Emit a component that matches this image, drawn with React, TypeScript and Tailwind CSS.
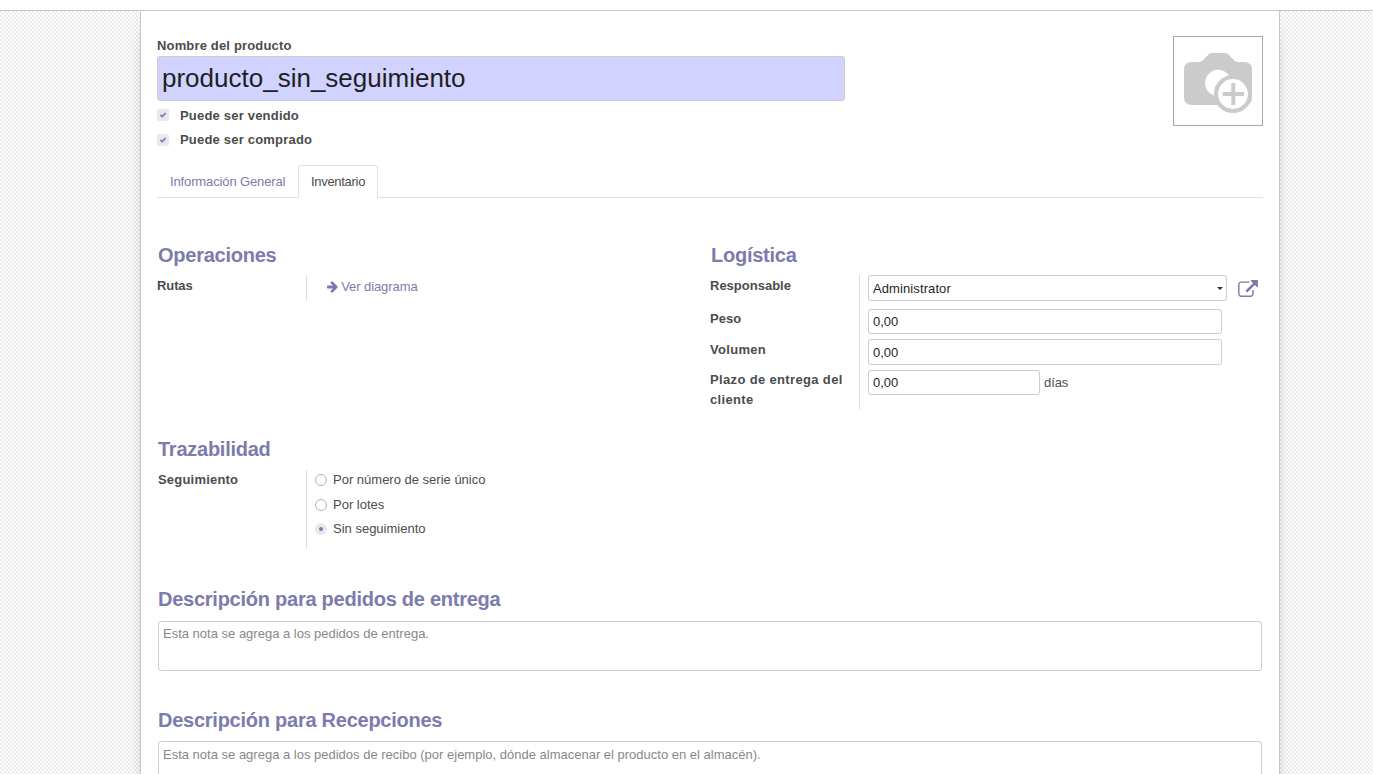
import type { ReactNode } from "react";

const label = "whitespace-nowrap text-[13px] leading-5 font-bold text-[#4c4c4c]";
const heading = "whitespace-nowrap text-[20px] leading-6 font-bold tracking-[-0.25px] text-[#7c7bad]";
const field = "rounded-[3px] border border-[#cccccc] bg-white px-1 text-[13px] text-[#1f1f1f]";

function Check({ children, boxClass }: { children: ReactNode; boxClass: string }) {
  return (
    <div className="flex h-5 items-start">
      <span className={`mr-[11px] size-3 rounded-[2px] bg-[#e6e9ed] ${boxClass}`}>
        <svg viewBox="0 0 12 12" className="size-3">
          <path d="M3.4 5.9 5.2 7.6 8.6 4.2" fill="none" stroke="#7c7bad" strokeWidth="1.7" />
        </svg>
      </span>
      <span className={`${label} pt-px tracking-[0.2px]`}>{children}</span>
    </div>
  );
}

function Radio({ children, checked }: { children: ReactNode; checked?: boolean }) {
  return (
    <div className="flex h-5 items-center">
      <span
        className={
          checked
            ? "mr-1.5 flex size-3 items-center justify-center rounded-full bg-[#e6e9ed]"
            : "mr-1.5 size-3 rounded-full border border-[#adb5bd] bg-white"
        }
      >
        {checked && <span className="size-1 rounded-full bg-[#7c7bad]" />}
      </span>
      <span className="text-[13px] leading-5 whitespace-nowrap text-[#4c4c4c]">{children}</span>
    </div>
  );
}

function Camera() {
  return (
    <svg viewBox="0 0 88 88" className="size-[90px] shrink-0 border border-[#a8a8a8] bg-white">
      <path
        d="M18 25h7q2.5 0 4-1.800L34.500 17.500Q35.500 16 37.500 16h14q2 0 3 1.500L60 23.200q1.500 1.800 4 1.800h6q8 0 8 8v27q0 8-8 8H18q-8 0-8-8V33q0-8 8-8Z"
        fill="#cbcbcb"
      />
      <circle cx="44.2" cy="46" r="13.2" fill="#fff" />
      <circle cx="59" cy="57" r="17" fill="#fff" stroke="#cbcbcb" strokeWidth="4.2" />
      <path d="M48.700 57H70M59.300 46v22" stroke="#cbcbcb" strokeWidth="4" />
    </svg>
  );
}

function ArrowRight() {
  return (
    <svg viewBox="0 0 1536 1920" className="h-[14px] w-[11.200px] shrink-0" fill="#7c7bad">
      <path d="M1472 960q0 54-37 91l-651 651q-39 37-91 37-51 0-90-37l-75-75q-38-38-38-91t38-91l293-293H117q-52 0-84.500-37.500T0 1024V896q0-53 32.500-90.500T117 768h704L528 474q-38-36-38-90t38-90l75-75q38-38 90-38 53 0 91 38l651 651q37 35 37 90z" />
    </svg>
  );
}

function ExternalLink() {
  return (
    <svg viewBox="0 0 1792 1536" className="ml-[11px] h-[17px] w-5 shrink-0" fill="#7c7bad">
      <path d="M1408 928v320q0 119-84.500 203.500T1120 1536H288q-119 0-203.500-84.500T0 1248V416q0-119 84.500-203.500T288 128h704q14 0 23 9t9 23v64q0 14-9 23t-23 9H288q-66 0-113 47t-47 113v832q0 66 47 113t113 47h832q66 0 113-47t47-113V928q0-14 9-23t23-9h64q14 0 23 9t9 23zm384-864v512q0 26-19 45t-45 19-45-19l-176-176-652 652q-10 10-23 10t-23-10L695 983q-10-10-10-23t10-23l652-652-176-176q-19-19-19-45t19-45 45-19h512q26 0 45 19t19 45z" />
    </svg>
  );
}

export default function App() {
  return (
    <div className="flex h-[774px] w-[1373px] flex-col overflow-hidden bg-white font-['Liberation_Sans',Arial,sans-serif]">
      <div className="h-[11px] shrink-0 border-b border-[#c8c8cb] bg-white" />
      <div className="flex min-h-0 flex-1 overflow-hidden bg-[conic-gradient(#ffffff_25%,#ebebeb_0_50%,#ffffff_0_75%,#ebebeb_0)] bg-size-[4px_4px] pl-[140px]">
        <main className="h-[900px] w-[1140px] shrink-0 border border-t-0 border-[#c8c8d3] bg-white pl-4 shadow-[0_5px_20px_-15px_#000]">
          <div className="flex h-[154px] w-[1106px] items-start justify-between pt-[25px]">
            <div className="w-[688px]">
              <div className={`${label} tracking-[0.16px]`}>Nombre del producto</div>
              <div className="flex h-[45px] items-center rounded-[3px] border border-[#cccccc] bg-[#d2d2ff] pl-1 text-[26px] text-[#1f1f1f]">
                <span className="whitespace-nowrap">producto_sin_seguimiento</span>
              </div>
              <div className="mt-1 flex flex-col gap-1">
                <Check boxClass="mt-1">Puede ser vendido</Check>
                <Check boxClass="mt-[5px]">Puede ser comprado</Check>
              </div>
            </div>
            <Camera />
          </div>

          <nav className="flex h-[33px] w-[1106px] border-b border-[#dee2e6] text-[13px]">
            <div className="w-[141px] pl-[13px] leading-[33px] tracking-[-0.13px] whitespace-nowrap text-[#7c7bad]">
              Información General
            </div>
            <div className="h-[33px] w-20 rounded-t-[3px] border border-b-0 border-[#dee2e6] bg-white pl-3 leading-[31px] tracking-[-0.3px] whitespace-nowrap text-[#4c4c4c]">
              Inventario
            </div>
          </nav>

          <div className="flex h-[239px] pt-[45px]">
            <section className="w-[553px]">
              <h2 className={`${heading} pl-px`}>Operaciones</h2>
              <div className="mt-2 flex">
                <div className={`${label} h-[26px] w-[150px] border-r border-[#dddddd] pt-px tracking-[-0.1px]`}>
                  Rutas
                </div>
                <div className="mt-[2px] flex h-5 items-center pl-5 text-[13px] text-[#7c7bad]">
                  <ArrowRight />
                  <span className="ml-[3px] tracking-[-0.08px] whitespace-nowrap">Ver diagrama</span>
                </div>
              </div>
            </section>
            <section>
              <h2 className={`${heading} pl-px`}>Logística</h2>
              <div className="mt-2 flex h-[134px]">
                <div className="w-[150px] border-r border-[#dddddd] pt-px">
                  <div className={label}>Responsable</div>
                  <div className={`${label} mt-[13px]`}>Peso</div>
                  <div className={`${label} mt-[11px] tracking-[0.3px]`}>Volumen</div>
                  <div className={`${label} mt-[10px] tracking-[0.35px]`}>
                    Plazo de entrega del
                    <br />
                    cliente
                  </div>
                </div>
                <div className="pl-2">
                  <div className="flex items-center">
                    <div className={`${field} flex h-[26px] w-[359px] items-center justify-between pr-[3px]`}>
                      <span className="pt-[2px] leading-[22px] tracking-[0.1px]">Administrator</span>
                      <svg viewBox="0 0 6 3" className="h-[3px] w-[6px]">
                        <path d="M0 0h6L3 3Z" fill="#333" />
                      </svg>
                    </div>
                    <ExternalLink />
                  </div>
                  <div className={`${field} mt-2 h-[25px] w-[354px] leading-[23px]`}>0,00</div>
                  <div className={`${field} mt-[5px] h-[26px] w-[354px] leading-[25px]`}>0,00</div>
                  <div className="mt-[5px] flex">
                    <div className={`${field} h-[25px] w-[172px] leading-[23px]`}>0,00</div>
                    <span className="ml-1 text-[13px] leading-[25px] tracking-[-0.1px] text-[#4c4c4c]">días</span>
                  </div>
                </div>
              </div>
            </section>
          </div>

          <section className="h-[150px] pl-px">
            <h2 className={heading}>Trazabilidad</h2>
            <div className="mt-[9px] flex h-[79px]">
              <div className={`${label} w-[149px] border-r border-[#dddddd] tracking-[0.2px]`}>Seguimiento</div>
              <div className="flex flex-col pl-2">
                <Radio>Por número de serie único</Radio>
                <div className="mt-[5px] mb-1">
                  <Radio>Por lotes</Radio>
                </div>
                <Radio checked>Sin seguimiento</Radio>
              </div>
            </div>
          </section>

          <section className="h-[121px] pl-px">
            <h2 className={heading}>Descripción para pedidos de entrega</h2>
            <div className={`${field} mt-[10px] h-[50px] w-[1104px] pt-0.5 leading-5`}>
              <span className="text-[#888888]">Esta nota se agrega a los pedidos de entrega.</span>
            </div>
          </section>
          <section className="pl-px">
            <h2 className={heading}>Descripción para Recepciones</h2>
            <div className={`${field} mt-[9px] h-[50px] w-[1104px] pt-[3px] leading-5`}>
              <span className="text-[#888888]">
                Esta nota se agrega a los pedidos de recibo (por ejemplo, dónde almacenar el producto en el almacén).
              </span>
            </div>
          </section>
        </main>
      </div>
    </div>
  );
}
